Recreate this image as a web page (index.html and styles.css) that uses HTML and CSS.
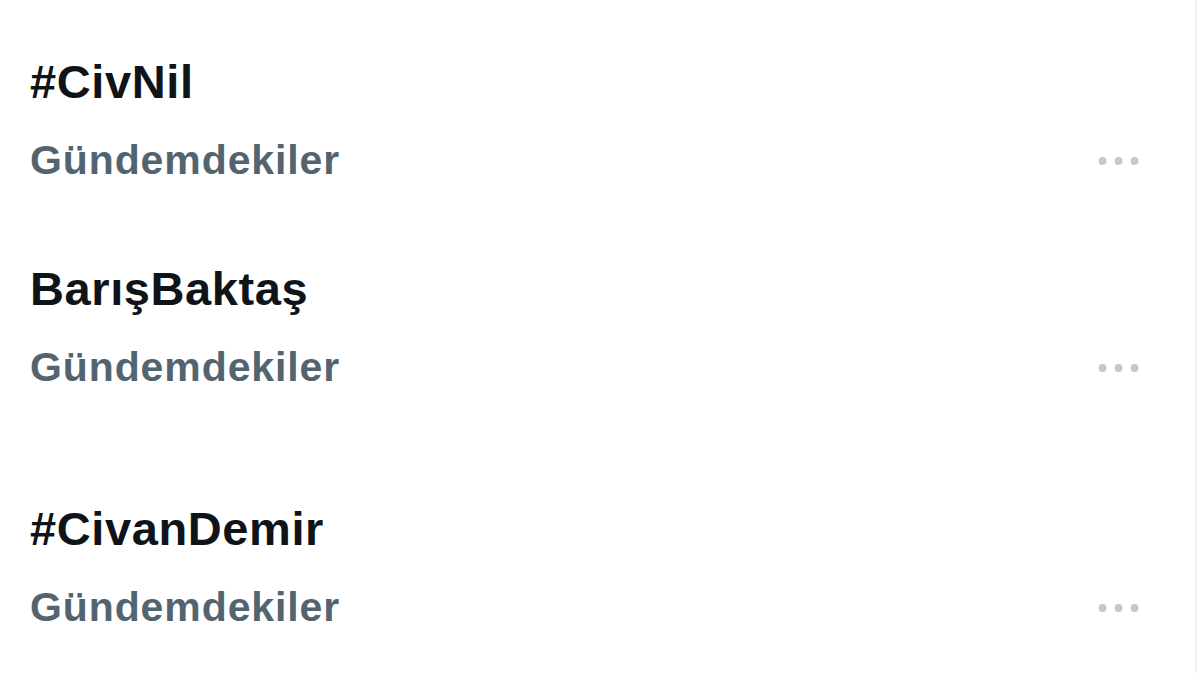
FILE: index.html
```html
<!DOCTYPE html>
<html lang="tr">
<head>
<meta charset="utf-8">
<title>Gündem</title>
<link rel="stylesheet" href="styles.css">
</head>
<body>
<main class="panel">
  <section class="trend trend-first">
    <div class="trend-title">#CivNil</div>
    <div class="trend-meta">
      <span class="trend-label">Gündemdekiler</span>
      <svg class="more" width="42" height="10" viewBox="0 0 42 10" aria-hidden="true"><circle cx="4.5" cy="5" r="4"/><circle cx="20.5" cy="5" r="4"/><circle cx="36.5" cy="5" r="4"/></svg>
    </div>
  </section>
  <section class="trend trend-second">
    <div class="trend-title">BarışBaktaş</div>
    <div class="trend-meta">
      <span class="trend-label">Gündemdekiler</span>
      <svg class="more" width="42" height="10" viewBox="0 0 42 10" aria-hidden="true"><circle cx="4.5" cy="5" r="4"/><circle cx="20.5" cy="5" r="4"/><circle cx="36.5" cy="5" r="4"/></svg>
    </div>
  </section>
  <section class="trend trend-third">
    <div class="trend-title">#CivanDemir</div>
    <div class="trend-meta">
      <span class="trend-label">Gündemdekiler</span>
      <svg class="more" width="42" height="10" viewBox="0 0 42 10" aria-hidden="true"><circle cx="4.5" cy="5" r="4"/><circle cx="20.5" cy="5" r="4"/><circle cx="36.5" cy="5" r="4"/></svg>
    </div>
  </section>
</main>
</body>
</html>
```

FILE: styles.css
```css
html, body {
  margin: 0;
  padding: 0;
  background: #ffffff;
}

body {
  font-family: "Liberation Sans", Arial, sans-serif;
}

.panel {
  box-sizing: border-box;
  width: 1197px;
  height: 673px;
  padding: 0 55px 0 30px;
  border-right: 2px solid #f1f2f4;
  display: flex;
  flex-direction: column;
  overflow: hidden;
}

.trend-first { margin-top: 54px; }
.trend-second { margin-top: 77px; }
.trend-third { margin-top: 110px; }

.trend-title {
  font-size: 47px;
  line-height: 56px;
  font-weight: 700;
  color: #0f1419;
  letter-spacing: 0.6px;
  margin-bottom: 26px;
}

.trend-meta {
  display: flex;
  justify-content: space-between;
  align-items: center;
  height: 48px;
}

.trend-label {
  font-size: 41px;
  line-height: 48px;
  font-weight: 700;
  color: #536471;
  letter-spacing: 0.9px;
}

.more {
  display: block;
  fill: #c3c8cf;
  margin-top: 2px;
}
```
